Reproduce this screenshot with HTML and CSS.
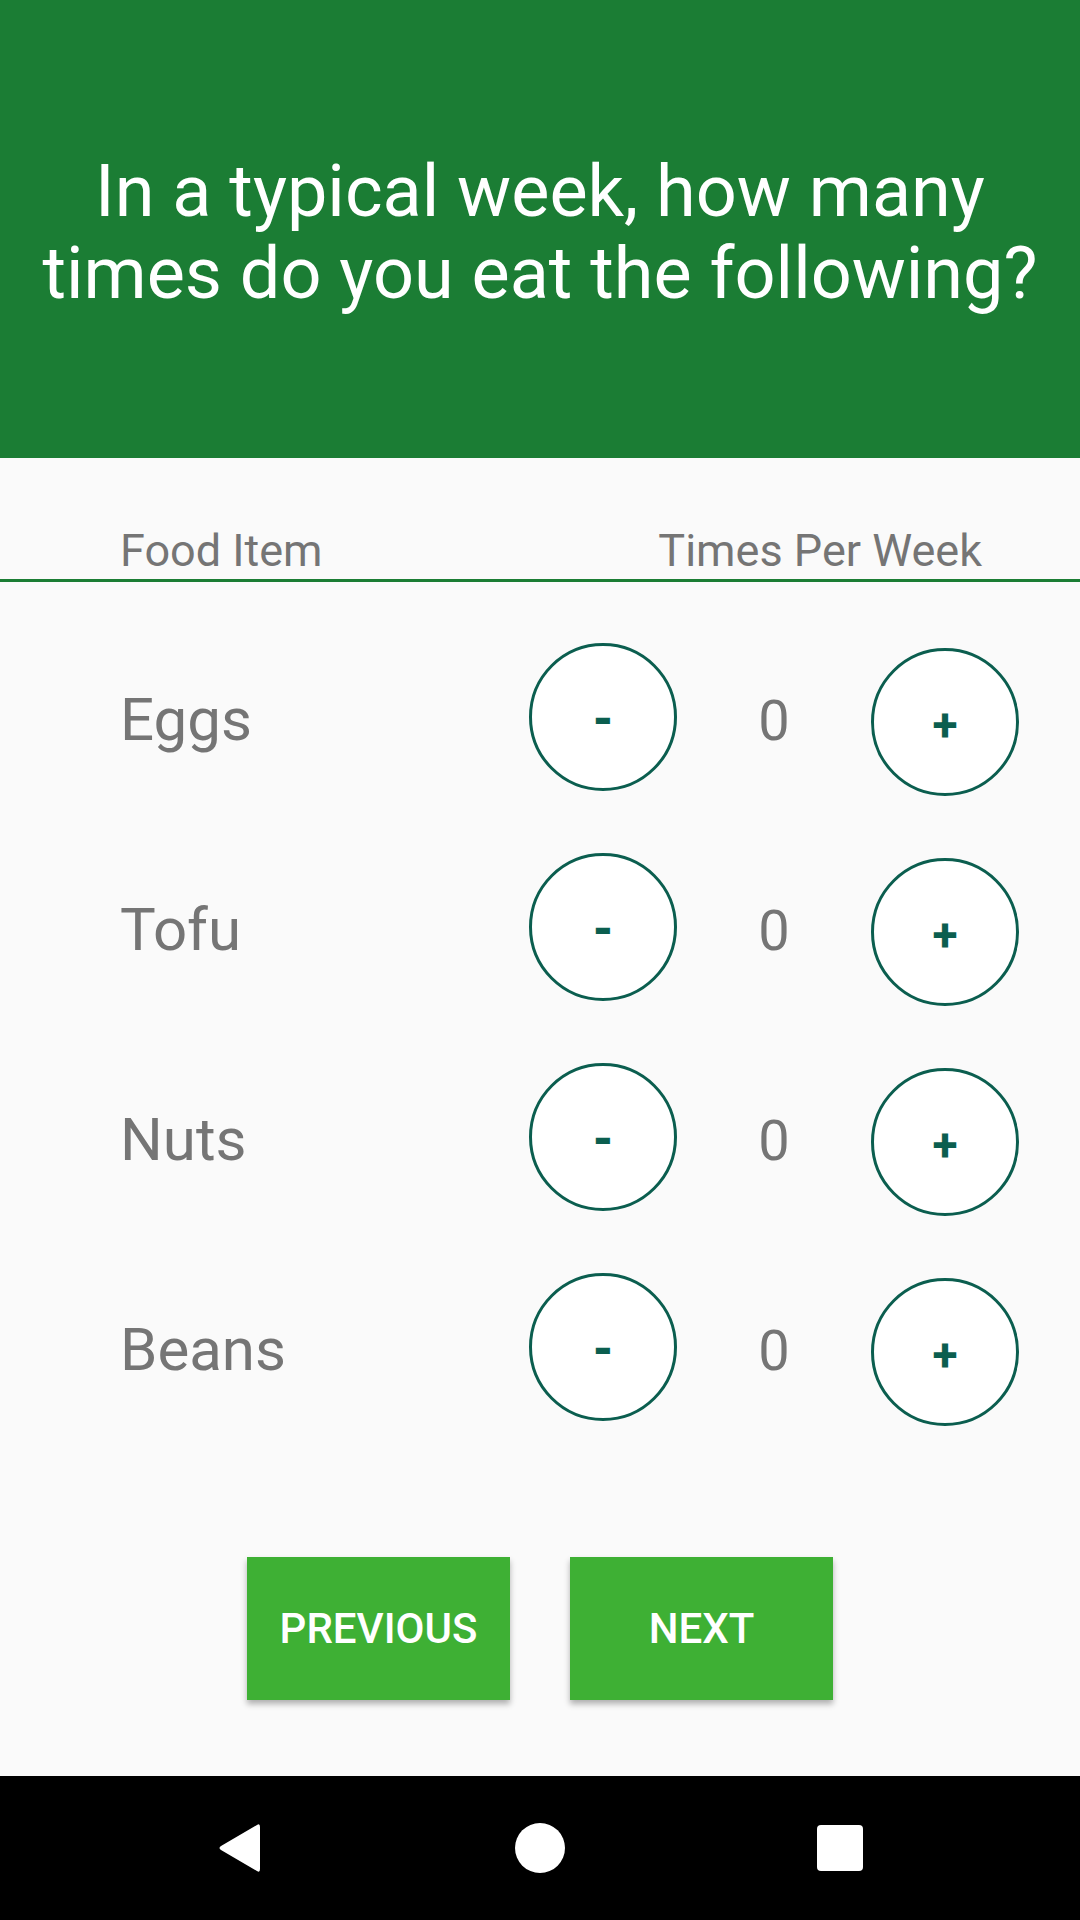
FILE: index.html
```html
<!DOCTYPE html>
<html>
<head>
<meta charset="utf-8">
<link rel="stylesheet" href="styles.css">
</head>
<body>
<div class="screen">
  <header class="header">
    <h1 class="title">In a typical week, how many times do you eat the following?</h1>
  </header>
  <main class="content">
    <div class="labels">
      <span class="label">Food Item</span>
      <span class="label label-right">Times Per Week</span>
    </div>
    <div class="rows">
      <div class="row">
        <span class="food">Eggs</span>
        <button class="circle minus">-</button>
        <span class="count">0</span>
        <button class="circle plus">+</button>
      </div>
      <div class="row">
        <span class="food">Tofu</span>
        <button class="circle minus">-</button>
        <span class="count">0</span>
        <button class="circle plus">+</button>
      </div>
      <div class="row">
        <span class="food">Nuts</span>
        <button class="circle minus">-</button>
        <span class="count">0</span>
        <button class="circle plus">+</button>
      </div>
      <div class="row">
        <span class="food">Beans</span>
        <button class="circle minus">-</button>
        <span class="count">0</span>
        <button class="circle plus">+</button>
      </div>
    </div>
    <div class="actions">
      <button class="action">PREVIOUS</button>
      <button class="action">NEXT</button>
    </div>
  </main>
  <nav class="navbar">
    <svg class="nav-icon" width="48" height="52" viewBox="0 0 48 52">
      <path d="M41 3 Q44 1 44 5 L44 47 Q44 51 41 49 L5 28 Q2 26 5 24 Z" fill="#fff"/>
    </svg>
    <svg class="nav-icon" width="52" height="52" viewBox="0 0 52 52">
      <circle cx="26" cy="26" r="25" fill="#fff"/>
    </svg>
    <svg class="nav-icon" width="48" height="48" viewBox="0 0 48 48">
      <rect x="1" y="1" width="46" height="46" rx="4" fill="#fff"/>
    </svg>
  </nav>
</div>
</body>
</html>
```
FILE: styles.css
```css
* { box-sizing: border-box; }
html, body { margin: 0; padding: 0; }
body {
  background: #fafafa;
  font-family: Roboto, "Noto Sans", sans-serif;
  width: 1080px;
}
.screen {
  display: flex;
  flex-direction: column;
  height: 1920px;
}
.header {
  height: 458px;
  background: #1b7d34;
  display: flex;
  align-items: center;
  justify-content: center;
  padding: 8px 20px 0;
}
.title {
  margin: 0;
  color: #fff;
  font-weight: 400;
  font-size: 72px;
  line-height: 82px;
  text-align: center;
}
.content {
  flex: 1;
  display: flex;
  flex-direction: column;
}
.labels {
  display: flex;
  justify-content: space-between;
  padding: 68px 98px 3px 120px;
  border-bottom: 3px solid #1b7d34;
}
.label {
  color: #757575;
  font-size: 45px;
  line-height: 50px;
}
.rows {
  padding-top: 32px;
  display: flex;
  flex-direction: column;
}
.row {
  height: 210px;
  display: flex;
  align-items: center;
  padding-left: 120px;
}
.food {
  width: 409px;
  color: #757575;
  font-size: 60px;
}
.circle {
  width: 148px;
  height: 148px;
  border-radius: 50%;
  border: 3px solid #0b5e4f;
  background: #fff;
  color: #0b5e4f;
  font-family: Roboto, sans-serif;
  font-weight: 900;
  font-size: 48px;
  line-height: 1;
  padding: 6px 0 0;
  display: flex;
  align-items: center;
  justify-content: center;
}
.minus { margin-top: -4px; }
.plus { margin-top: 6px; font-weight: 700; font-size: 46px; }
.count {
  width: 194px;
  text-align: center;
  color: #757575;
  font-size: 56px;
  padding-top: 4px;
}
.actions {
  display: flex;
  justify-content: center;
  gap: 60px;
  padding-top: 103px;
}
.action {
  width: 263px;
  height: 143px;
  border: none;
  background: #3eb034;
  color: #fff;
  font-family: Roboto, sans-serif;
  font-weight: 500;
  font-size: 42px;
  box-shadow: 0 4px 6px rgba(0, 0, 0, 0.3);
  padding: 0;
}
.navbar {
  height: 144px;
  background: #000;
  display: flex;
  align-items: center;
  justify-content: space-between;
  padding: 0 216px 0 216px;
}
.nav-icon { display: block; }
```
